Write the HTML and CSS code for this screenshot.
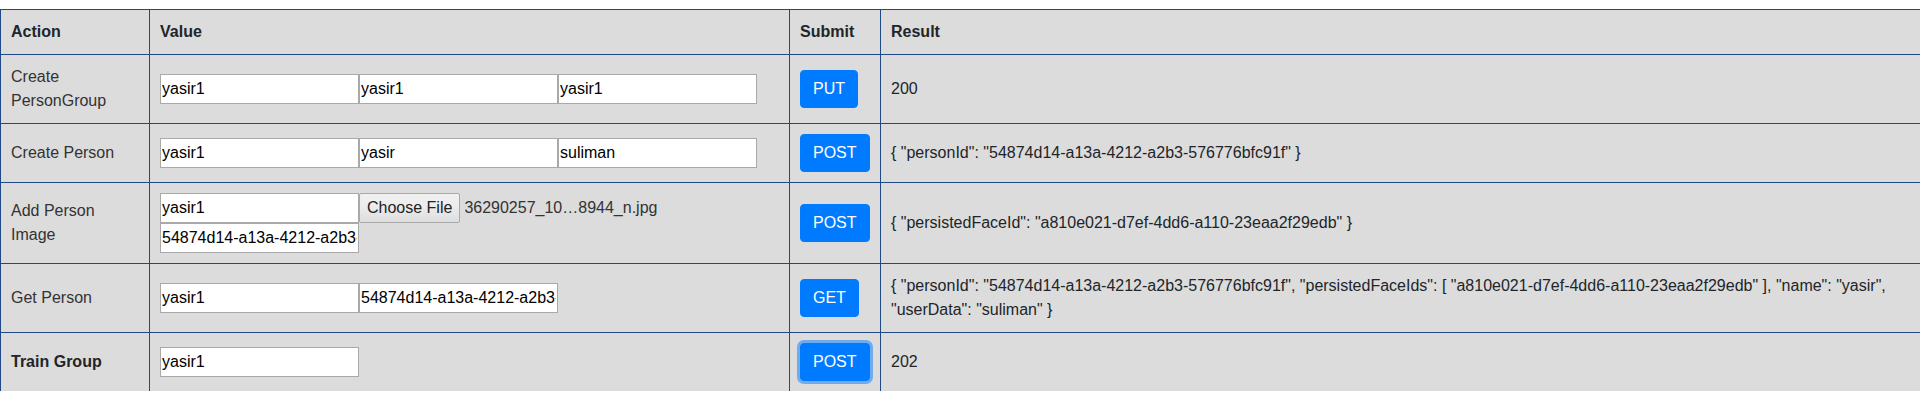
FILE: index.html
```html
<!DOCTYPE html>
<html lang="en">
<head>
<meta charset="utf-8">
<title>Face API</title>
<link rel="stylesheet" href="styles.css">
</head>
<body>
<div class="page">
<table class="api-table">
  <colgroup>
    <col class="c-action">
    <col class="c-value">
    <col class="c-submit">
    <col class="c-result">
  </colgroup>
  <thead>
    <tr><th>Action</th><th>Value</th><th>Submit</th><th>Result</th></tr>
  </thead>
  <tbody>
    <tr>
      <td class="label">Create PersonGroup</td>
      <td><div class="fields"><input class="field" type="text" value="yasir1"><input class="field" type="text" value="yasir1"><input class="field" type="text" value="yasir1"></div></td>
      <td><button class="btn" type="button">PUT</button></td>
      <td class="result">200</td>
    </tr>
    <tr>
      <td class="label">Create Person</td>
      <td><div class="fields"><input class="field" type="text" value="yasir1"><input class="field" type="text" value="yasir"><input class="field" type="text" value="suliman"></div></td>
      <td><button class="btn" type="button">POST</button></td>
      <td class="result">{ "personId": "54874d14-a13a-4212-a2b3-576776bfc91f" }</td>
    </tr>
    <tr>
      <td class="label">Add Person Image</td>
      <td><div class="fields"><input class="field" type="text" value="yasir1"><span class="file-btn">Choose File</span><span class="file-name">36290257_10…8944_n.jpg</span><span class="break"></span><input class="field" type="text" value="54874d14-a13a-4212-a2b3-576776bfc91f"></div></td>
      <td><button class="btn" type="button">POST</button></td>
      <td class="result">{ "persistedFaceId": "a810e021-d7ef-4dd6-a110-23eaa2f29edb" }</td>
    </tr>
    <tr>
      <td class="label">Get Person</td>
      <td><div class="fields"><input class="field" type="text" value="yasir1"><input class="field" type="text" value="54874d14-a13a-4212-a2b3-576776bfc91f"></div></td>
      <td><button class="btn" type="button">GET</button></td>
      <td class="result">{ "personId": "54874d14-a13a-4212-a2b3-576776bfc91f", "persistedFaceIds": [ "a810e021-d7ef-4dd6-a110-23eaa2f29edb" ], "name": "yasir", "userData": "suliman" }</td>
    </tr>
    <tr class="last">
      <th class="label-strong">Train Group</th>
      <td><div class="fields"><input class="field" type="text" value="yasir1"></div></td>
      <td><button class="btn btn-focus" type="button">POST</button></td>
      <td class="result">202</td>
    </tr>
  </tbody>
</table>
</div>
</body>
</html>
```

FILE: styles.css
```css
* { box-sizing: border-box; }

html, body {
  margin: 0;
  padding: 0;
  background: #ffffff;
}

body {
  font-family: "Liberation Sans", Arial, sans-serif;
  font-size: 16px;
  line-height: 24px;
  color: #212529;
}

.page {
  padding-top: 9px;
}

.api-table {
  width: 1920px;
  table-layout: fixed;
  border-collapse: collapse;
  background: #dcdcdc;
}

.c-action { width: 149px; }
.c-value { width: 640px; }
.c-submit { width: 91px; }
.c-result { width: 1040px; }

.api-table th,
.api-table td {
  border: 1px solid #204a87;
  padding: 10px;
  text-align: left;
  vertical-align: middle;
}

.api-table th {
  font-weight: bold;
  color: #212529;
}

.api-table tr.last th,
.api-table tr.last td {
  border-bottom: none;
}

.label {
  color: #333333;
}

.result {
  color: #212529;
}

.fields {
  display: flex;
  flex-wrap: wrap;
  align-items: center;
}

.field {
  width: 199px;
  height: 30px;
  margin: 0;
  padding: 2px 1px;
  border: 1px solid #a9a9a9;
  background: #ffffff;
  color: #000000;
  font-family: inherit;
  font-size: 16px;
  line-height: 24px;
  outline: none;
}

.file-btn {
  display: inline-block;
  height: 30px;
  padding: 2px 7px;
  border: 1px solid #a9a9a9;
  border-radius: 2px;
  background: linear-gradient(#f0f0f0, #ededed 40%, #dedede);
  color: #222222;
  line-height: 24px;
}

.file-name {
  margin-left: 4px;
  color: #333333;
}

.break {
  flex-basis: 100%;
  height: 0;
}

.btn {
  display: inline-block;
  margin: 0;
  padding: 6px 12px;
  border: 1px solid #007bff;
  border-radius: 4px;
  background: #007bff;
  color: #ffffff;
  font-family: inherit;
  font-size: 16px;
  line-height: 24px;
  cursor: pointer;
}

.btn-focus {
  box-shadow: 0 0 0 3px rgba(0, 123, 255, 0.5);
}
```
